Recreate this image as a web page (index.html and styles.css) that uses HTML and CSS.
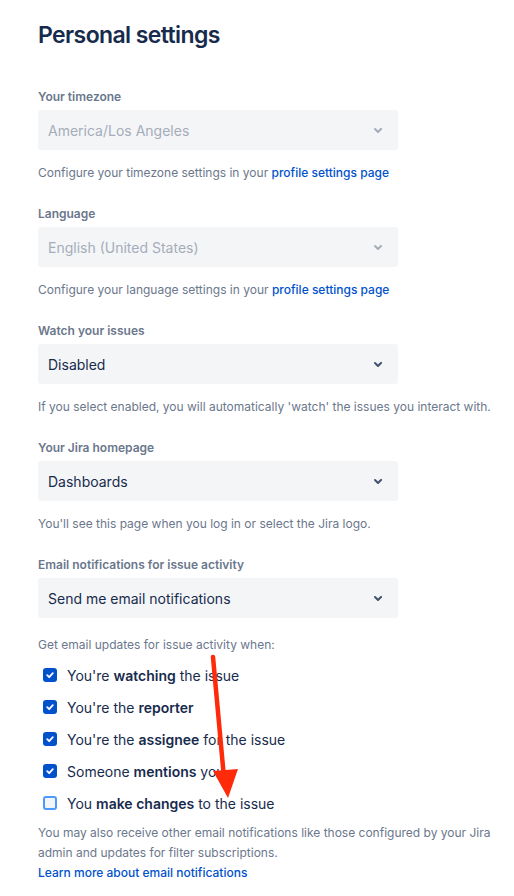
FILE: index.html
```html
<!DOCTYPE html>
<html lang="en">
<head>
<meta charset="utf-8">
<title>Personal settings</title>
<link rel="stylesheet" href="styles.css">
</head>
<body>
<main class="page">
  <h1 class="title">Personal settings</h1>

  <section class="field">
    <div class="label">Your timezone</div>
    <div class="select disabled"><span>America/Los Angeles</span>
      <svg class="chev" width="24" height="24" viewBox="0 0 24 24"><path d="M8.3 10.3a1 1 0 0 1 1.4 0L12 12.6l2.3-2.3a1 1 0 1 1 1.4 1.4l-3 3a1 1 0 0 1-1.4 0l-3-3a1 1 0 0 1 0-1.4z" fill="currentColor"/></svg>
    </div>
    <p class="help">Configure your timezone settings in your <a class="link">profile settings page</a></p>
  </section>

  <section class="field">
    <div class="label">Language</div>
    <div class="select disabled"><span>English (United States)</span>
      <svg class="chev" width="24" height="24" viewBox="0 0 24 24"><path d="M8.3 10.3a1 1 0 0 1 1.4 0L12 12.6l2.3-2.3a1 1 0 1 1 1.4 1.4l-3 3a1 1 0 0 1-1.4 0l-3-3a1 1 0 0 1 0-1.4z" fill="currentColor"/></svg>
    </div>
    <p class="help">Configure your language settings in your <a class="link">profile settings page</a></p>
  </section>

  <section class="field">
    <div class="label">Watch your issues</div>
    <div class="select"><span>Disabled</span>
      <svg class="chev" width="24" height="24" viewBox="0 0 24 24"><path d="M8.3 10.3a1 1 0 0 1 1.4 0L12 12.6l2.3-2.3a1 1 0 1 1 1.4 1.4l-3 3a1 1 0 0 1-1.4 0l-3-3a1 1 0 0 1 0-1.4z" fill="currentColor"/></svg>
    </div>
    <p class="help">If you select enabled, you will automatically 'watch' the issues you interact with.</p>
  </section>

  <section class="field">
    <div class="label">Your Jira homepage</div>
    <div class="select"><span>Dashboards</span>
      <svg class="chev" width="24" height="24" viewBox="0 0 24 24"><path d="M8.3 10.3a1 1 0 0 1 1.4 0L12 12.6l2.3-2.3a1 1 0 1 1 1.4 1.4l-3 3a1 1 0 0 1-1.4 0l-3-3a1 1 0 0 1 0-1.4z" fill="currentColor"/></svg>
    </div>
    <p class="help">You'll see this page when you log in or select the Jira logo.</p>
  </section>

  <section class="field last">
    <div class="label">Email notifications for issue activity</div>
    <div class="select"><span>Send me email notifications</span>
      <svg class="chev" width="24" height="24" viewBox="0 0 24 24"><path d="M8.3 10.3a1 1 0 0 1 1.4 0L12 12.6l2.3-2.3a1 1 0 1 1 1.4 1.4l-3 3a1 1 0 0 1-1.4 0l-3-3a1 1 0 0 1 0-1.4z" fill="currentColor"/></svg>
    </div>
    <p class="help email-help">Get email updates for issue activity when:</p>
    <ul class="checks">
      <li class="check"><span class="box on"><svg width="10" height="10" viewBox="0 0 10 10"><path d="M2.2 5.2l2 2 3.6-4" fill="none" stroke="#fff" stroke-width="1.8" stroke-linecap="round" stroke-linejoin="round"/></svg></span><span>You're <b>watching</b> the issue</span></li>
      <li class="check"><span class="box on"><svg width="10" height="10" viewBox="0 0 10 10"><path d="M2.2 5.2l2 2 3.6-4" fill="none" stroke="#fff" stroke-width="1.8" stroke-linecap="round" stroke-linejoin="round"/></svg></span><span>You're the <b>reporter</b></span></li>
      <li class="check"><span class="box on"><svg width="10" height="10" viewBox="0 0 10 10"><path d="M2.2 5.2l2 2 3.6-4" fill="none" stroke="#fff" stroke-width="1.8" stroke-linecap="round" stroke-linejoin="round"/></svg></span><span>You're the <b>assignee</b> for the issue</span></li>
      <li class="check"><span class="box on"><svg width="10" height="10" viewBox="0 0 10 10"><path d="M2.2 5.2l2 2 3.6-4" fill="none" stroke="#fff" stroke-width="1.8" stroke-linecap="round" stroke-linejoin="round"/></svg></span><span>Someone <b>mentions</b> you</span></li>
      <li class="check"><span class="box off"></span><span>You <b>make changes</b> to the issue</span></li>
    </ul>
    <p class="note">You may also receive other email notifications like those configured by your Jira admin and updates for filter subscriptions.<br><a class="link">Learn more about email notifications</a></p>
  </section>

  <svg class="arrow" width="514" height="896" viewBox="0 0 514 896">
    <line x1="213" y1="657" x2="224" y2="778" stroke="#FF2A0A" stroke-width="4.5" stroke-linecap="round"/>
    <polygon points="213,771 238,769 228,798" fill="#FF2A0A"/>
  </svg>
</main>
</body>
</html>
```

FILE: styles.css
```css
* { box-sizing: border-box; }
html, body { margin: 0; padding: 0; background: #fff; }
body {
  font-family: Inter, "Noto Sans", "Liberation Sans", sans-serif;
  color: #172B4D;
  -webkit-font-smoothing: antialiased;
}
.page {
  position: relative;
  width: 514px;
  height: 896px;
  padding: 21px 0 0 38px;
  overflow: hidden;
}
.title {
  margin: 0 0 40px;
  font-size: 23px;
  line-height: 28px;
  font-weight: 600;
  letter-spacing: -0.6px;
  color: #172B4D;
}
.field { margin-bottom: 25px; }
.label {
  font-size: 12px;
  line-height: 16px;
  font-weight: 600;
  color: #6B778C;
  margin-bottom: 5px;
}
.select {
  width: 360px;
  height: 40px;
  background: #F4F5F7;
  border-radius: 3px;
  display: flex;
  align-items: center;
  justify-content: space-between;
  padding: 0 8px 0 10px;
  font-size: 14px;
  color: #172B4D;
}
.select.disabled { color: #A5ADBA; }
.select .chev { color: #42526E; }
.select.disabled .chev { color: #A5ADBA; }
.help {
  margin: 15px 0 0;
  font-size: 12px;
  line-height: 16px;
  color: #6B778C;
  white-space: nowrap;
}
.email-help { margin-top: 19px; }
.link {
  color: #0052CC;
  font-weight: 500;
  text-decoration: none;
}
.checks {
  list-style: none;
  margin: 6px 0 0;
  padding: 0;
}
.check {
  height: 32px;
  display: flex;
  align-items: center;
  font-size: 14px;
  color: #172B4D;
}
.check b { font-weight: 600; }
.box {
  width: 14px;
  height: 14px;
  border-radius: 3px;
  margin: 0 10px 0 5px;
  display: flex;
  align-items: center;
  justify-content: center;
  flex: none;
}
.box.on { background: #0052CC; }
.box.off { border: 2px solid #4C9AFF; background: #F4F5F7; }
.note {
  margin: 4px 0 0;
  width: 460px;
  font-size: 12px;
  line-height: 20px;
  color: #6B778C;
}
.arrow {
  position: absolute;
  left: 0;
  top: 0;
  pointer-events: none;
}
```
